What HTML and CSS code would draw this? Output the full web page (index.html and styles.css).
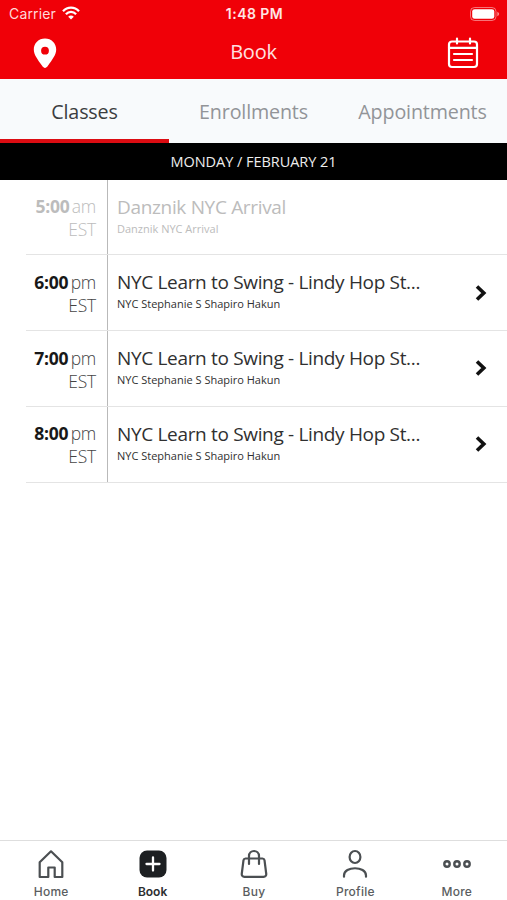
FILE: index.html
```html
<!DOCTYPE html>
<html lang="en">
<head>
<meta charset="utf-8">
<meta name="viewport" content="width=device-width, initial-scale=1">
<title>Book</title>
<link rel="stylesheet" href="styles.css">
</head>
<body>
<div class="app">
  <header class="header">
    <div class="status">
      <div class="carrier"><span>Carrier</span>
        <svg width="18" height="14" viewBox="0 0 18 14" fill="none" stroke="#fff" stroke-width="2.3"><path d="M1 5.2C5.5.4 12.500.4 17 5.200M3.900 8.200c2.900-3 7.300-3 10.200 0"/><path d="M6.200 10.700c1.600-1.600 4-1.600 5.600 0L9 13.600z" fill="#fff" stroke="none"/></svg>
      </div>
      <span class="clock">1:48 PM</span>
      <svg class="battery" width="30" height="14" viewBox="0 0 30 14"><rect x=".5" y=".5" width="25.500" height="13" rx="4" fill="none" stroke="#fff" stroke-opacity=".45"/><rect x="2.200" y="2.200" width="22.100" height="9.600" rx="2.400" fill="#fff"/><path d="M27.300 4.800c2.400.8 2.400 3.600 0 4.400z" fill="#fff" fill-opacity=".55"/></svg>
    </div>
    <div class="titlebar">
      <svg class="pin" width="24" height="31" viewBox="0 0 24 31"><path fill="#fff" fill-rule="evenodd" d="M12 .5C5.600.5.800 5.300.800 11.500c0 5.300 4 10.200 8.300 16.300 1.900 2.800 3.900 2.800 5.800 0 4.300-6.100 8.300-11 8.300-16.300C23.200 5.300 18.400.5 12 .5zm0 8.300a3.900 3.900 0 1 1 0 7.800 3.900 3.900 0 0 1 0-7.800z"/></svg>
      <h1 class="title">Book</h1>
      <svg class="calendar" width="32" height="32" viewBox="0 0 32 32" fill="none" stroke="#fff" stroke-width="2.200" stroke-linecap="round"><rect x="2" y="4.500" width="28" height="25.500" rx="3"/><path d="M2 10.800h28M10 1.500v5M23 1.500v5M7 17h18M7 23h18"/></svg>
    </div>
  </header>
  <nav class="tabs">
    <a class="tab active">Classes</a>
    <a class="tab">Enrollments</a>
    <a class="tab">Appointments</a>
  </nav>
  <div class="date"><span>MONDAY / FEBRUARY 21</span></div>
  <main class="list">
    <div class="row past">
      <div class="time"><b>5:00</b> <span>am</span><br><span>EST</span></div>
      <div class="info"><div class="name">Danznik NYC Arrival</div><div class="staff">Danznik NYC Arrival</div></div>
    </div>
    <div class="row">
      <div class="time"><b>6:00</b> <span>pm</span><br><span>EST</span></div>
      <div class="info"><div class="name">NYC Learn to Swing - Lindy Hop St...</div><div class="staff">NYC Stephanie S Shapiro Hakun</div></div>
      <svg class="chevron" width="12" height="16" viewBox="0 0 12 16" fill="none" stroke="#111" stroke-width="3.600"><path d="M2 1.500 8.800 8 2 14.500"/></svg>
    </div>
    <div class="row">
      <div class="time"><b>7:00</b> <span>pm</span><br><span>EST</span></div>
      <div class="info"><div class="name">NYC Learn to Swing - Lindy Hop St...</div><div class="staff">NYC Stephanie S Shapiro Hakun</div></div>
      <svg class="chevron" width="12" height="16" viewBox="0 0 12 16" fill="none" stroke="#111" stroke-width="3.600"><path d="M2 1.500 8.800 8 2 14.500"/></svg>
    </div>
    <div class="row">
      <div class="time"><b>8:00</b> <span>pm</span><br><span>EST</span></div>
      <div class="info"><div class="name">NYC Learn to Swing - Lindy Hop St...</div><div class="staff">NYC Stephanie S Shapiro Hakun</div></div>
      <svg class="chevron" width="12" height="16" viewBox="0 0 12 16" fill="none" stroke="#111" stroke-width="3.600"><path d="M2 1.500 8.800 8 2 14.500"/></svg>
    </div>
  </main>
  <nav class="bottom">
    <a class="item"><svg width="30" height="30" viewBox="0 0 30 30" fill="none" stroke="#4b4f52" stroke-width="2.200" stroke-linejoin="round"><path d="M3.700 28V13.300L15 2.300l11.300 11V28h-7.600v-9.500h-6.400V28z"/></svg><span>Home</span></a>
    <a class="item current"><svg width="30" height="30" viewBox="0 0 30 30"><rect x="1.500" y="1.500" width="27" height="27" rx="7.500" fill="#1d2022"/><path d="M15 8.500v13M8.500 15h13" stroke="#fff" stroke-width="2.300" stroke-linecap="round"/></svg><span>Book</span></a>
    <a class="item"><svg width="30" height="30" viewBox="0 0 30 30" fill="none" stroke="#4b4f52" stroke-width="2.200" stroke-linecap="round" stroke-linejoin="round"><path d="M6.500 9.500h17c1.200 0 1.800.6 2 1.700l1.700 13.300c.3 2-.7 3.300-2.600 3.300H5.400c-1.900 0-2.900-1.300-2.600-3.300l1.700-13.300c.2-1.100.8-1.700 2-1.700zM10 15V7c0-6.700 10-6.700 10 0v8"/></svg><span>Buy</span></a>
    <a class="item"><svg width="30" height="30" viewBox="0 0 30 30" fill="none" stroke="#4b4f52" stroke-width="2.200" stroke-linecap="round"><ellipse cx="15" cy="8" rx="5.400" ry="6"/><path d="M4 27.700v-1.200c0-9.700 22-9.700 22 0v1.200"/></svg><span>Profile</span></a>
    <a class="item"><svg width="30" height="30" viewBox="0 0 30 30" fill="none" stroke="#4b4f52" stroke-width="2.400"><circle cx="5" cy="15" r="2.700"/><circle cx="15" cy="15" r="2.700"/><circle cx="25" cy="15" r="2.700"/></svg><span>More</span></a>
  </nav>
</div>
</body>
</html>
```
FILE: styles.css
```css
* { box-sizing: border-box; }
body { margin: 0; background: #fff; font-family: "Open Sans", "Noto Sans", sans-serif; color: #303030; }
svg { display: block; flex: none; }
.app { height: 900px; display: flex; flex-direction: column; overflow: hidden; }

.header { height: 79px; flex: none; background: #f00008; color: #fff; }
.status { height: 27px; padding: 0 7px 0 9px; display: grid; grid-template-columns: 1fr auto 1fr; align-items: center; font: 14px/20px Inter, sans-serif; }
.carrier { display: flex; align-items: center; gap: 6px; color: #ffd9d9; letter-spacing: .15px; }
.carrier svg { margin-top: -1px; }
.clock { font-weight: 600; font-size: 14px; letter-spacing: .45px; color: #ffe5e5; }
.battery { justify-self: end; }
.titlebar { height: 52px; padding: 0 28px 0 33px; display: grid; grid-template-columns: 1fr auto 1fr; align-items: center; }
.title { margin: -2px 5px 0 0; font: 400 20px/28px "Open Sans", sans-serif; letter-spacing: -.2px; color: #ffe0e0; }
.calendar { justify-self: end; }

.tabs { height: 63.500px; flex: none; display: grid; grid-template-columns: repeat(3, 1fr); background: #f8fafc; }
.tab { display: flex; align-items: center; justify-content: center; padding-top: 5px; border-bottom: 4px solid transparent; font-size: 19.700px; letter-spacing: -.15px; color: #929498; }
.tab.active { color: #3b3d40; border-bottom-color: #dc0c12; }

.date { height: 37px; flex: none; display: flex; align-items: center; justify-content: center; background: #000; color: #eee; font-size: 14.500px; letter-spacing: -.04px; }

.list { flex: 1; }
.row { height: 75.800px; margin-left: 26px; display: flex; align-items: stretch; border-bottom: 1px solid #e4e4e4; }
.time { width: 81.500px; flex: none; padding: 15.500px 10.500px 0 0; border-right: 1px solid #b9b9b9; text-align: right; font-size: 17.500px; line-height: 23px; letter-spacing: -.25px; word-spacing: -2px; white-space: nowrap; }
.time b { font-weight: 700; color: #181818; }
.time span { font-weight: 300; color: #444; }
.info { flex: 1; padding: 14px 0 0 9.500px; white-space: nowrap; }
.name { font-size: 19px; line-height: 26px; letter-spacing: -.33px; }
.staff { font-size: 11px; line-height: 17px; }
.chevron { align-self: center; margin-right: 20px; }
.past .name, .past .staff, .past .time b, .past .time span { color: #bcbcbc; }

.bottom { height: 60px; flex: none; display: grid; grid-template-columns: repeat(5, 1fr); border-top: 1px solid #dedede; }
.item { display: flex; flex-direction: column; align-items: center; padding: 7.500px 0 0 1px; font: 500 12px/18px Inter, sans-serif; letter-spacing: .25px; color: #5a5d60; }
.item span { margin-top: 4px; }
.current { color: #2c2e30; font-weight: 600; letter-spacing: 0; }
```
